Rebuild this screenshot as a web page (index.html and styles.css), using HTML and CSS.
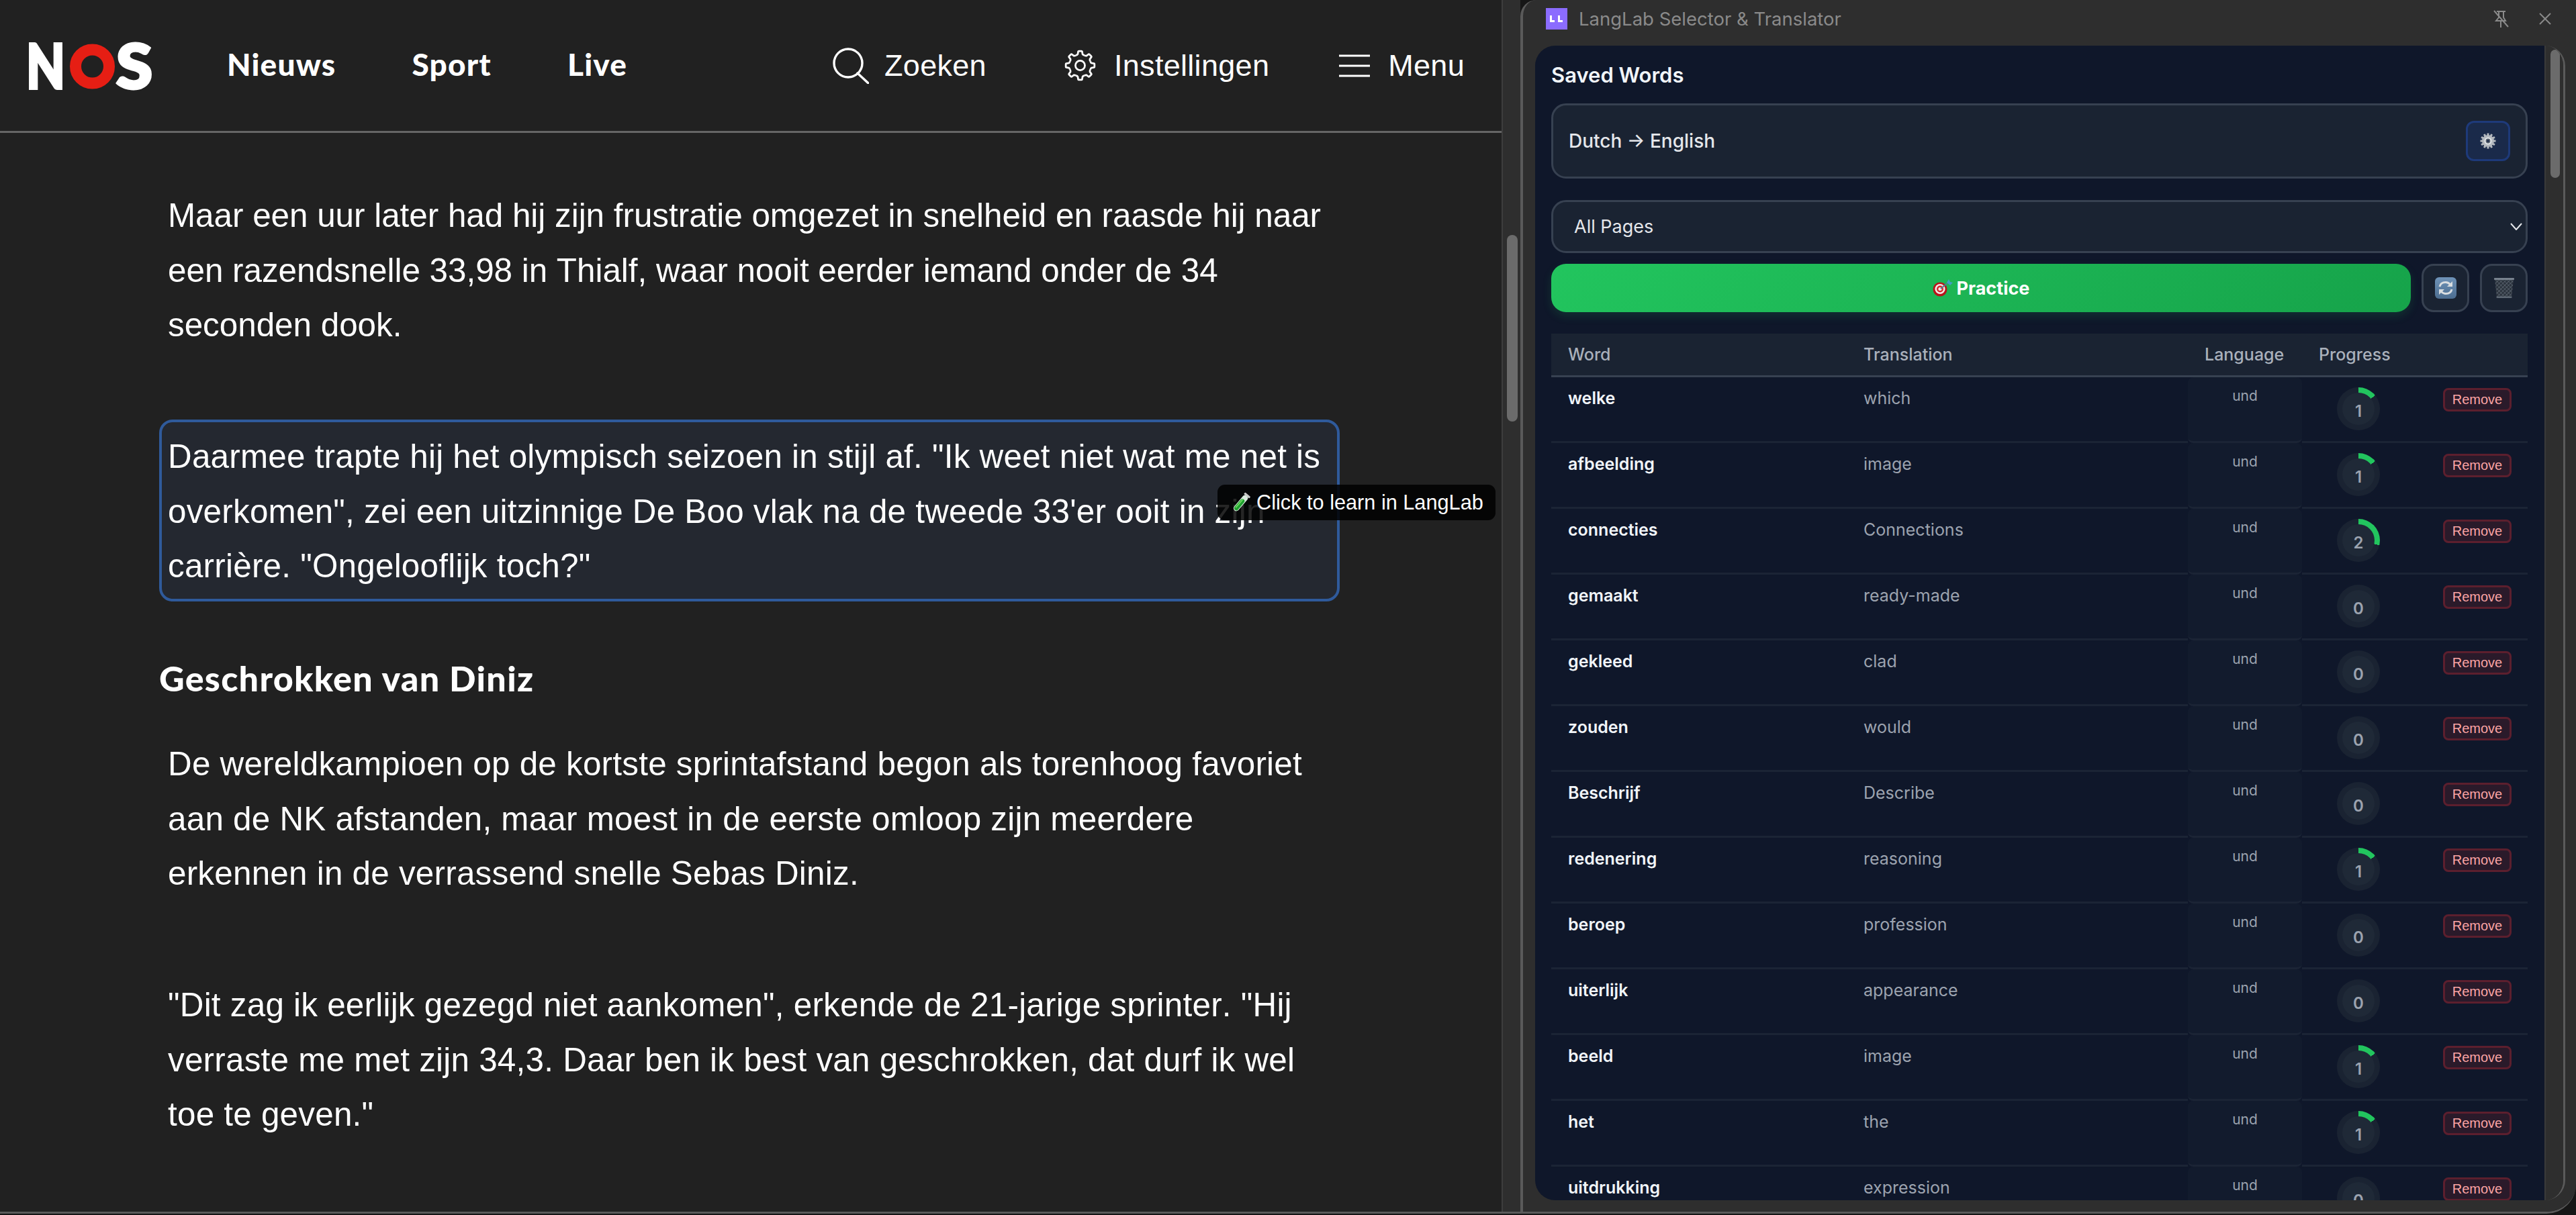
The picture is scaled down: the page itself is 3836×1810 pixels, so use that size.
FILE: index.html
```html
<!DOCTYPE html>
<html lang="nl">
<head>
    <meta charset="UTF-8">
    <title>NOS - LangLab</title>
    <link rel="stylesheet" href="styles.css">
</head>
<body>
    <div class="app">
        <div class="site">
            <header class="site-head">
                <svg class="logo" viewBox="0 0 190 110" width="190" height="110" role="img" aria-label="NOS">
                    <text x="-2" y="88" textLength="58" lengthAdjust="spacingAndGlyphs">N</text>
                    <circle cx="96.5" cy="55" r="25" fill="none" stroke="#e61e14" stroke-width="17"/>
                    <text x="132" y="87.5" textLength="54" lengthAdjust="spacingAndGlyphs">S</text>
                </svg>
                <nav class="main-nav">
                    <a>Nieuws</a>
                    <a>Sport</a>
                    <a>Live</a>
                </nav>
                <div class="tools">
                    <a class="tool tool-search">
                        <svg width="54" height="54" viewBox="0 0 54 54" fill="none" stroke="#fff" stroke-width="3.4" stroke-linecap="round">
                            <circle cx="23" cy="23" r="21"/>
                            <path d="M37 38 L53 53"/>
                        </svg>
                        Zoeken
                    </a>
                    <a class="tool">
                        <svg width="47" height="47" viewBox="0 0 24 24" fill="none" stroke="#fff" stroke-width="1.4" stroke-linejoin="round">
                            <defs>
                                <path id="cog" d="M8.79 4.24C9.5 4.1 10 3.8 10.2 3.4L10.5 1.4Q10.6 1.1 11 1.1H13Q13.4 1.1 13.5 1.4L13.8 3.4C14 3.8 14.5 4.1 15.21 4.24"/>
                            </defs>
                            <use href="#cog"/>
                            <use href="#cog" transform="rotate(45 12 12)"/>
                            <use href="#cog" transform="rotate(90 12 12)"/>
                            <use href="#cog" transform="rotate(135 12 12)"/>
                            <use href="#cog" transform="rotate(180 12 12)"/>
                            <use href="#cog" transform="rotate(225 12 12)"/>
                            <use href="#cog" transform="rotate(270 12 12)"/>
                            <use href="#cog" transform="rotate(315 12 12)"/>
                            <circle cx="12" cy="12" r="3.6"/>
                        </svg>
                        Instellingen
                    </a>
                    <a class="tool">
                        <svg width="46" height="34" viewBox="0 0 46 34" stroke="#fff" stroke-width="3">
                            <path d="M0 2H46M0 17H46M0 32H46"/>
                        </svg>
                        Menu
                    </a>
                </div>
            </header>

            <main class="article">
                <p class="para">Maar een uur later had hij zijn frustratie omgezet in snelheid en raasde hij naar een razendsnelle 33,98 in Thialf, waar nooit eerder iemand onder de 34 seconden dook.</p>
                <p class="para para-wide para-active">Daarmee trapte hij het olympisch seizoen in stijl af. "Ik weet niet wat me net is overkomen", zei een uitzinnige De Boo vlak na de tweede 33'er ooit in zijn carrière. "Ongelooflijk toch?"</p>
                <h2 class="article-sub">Geschrokken van Diniz</h2>
                <p class="para para-wide">De wereldkampioen op de kortste sprintafstand begon als torenhoog favoriet aan de NK afstanden, maar moest in de eerste omloop zijn meerdere erkennen in de verrassend snelle Sebas Diniz.</p>
                <p class="para para-wide">"Dit zag ik eerlijk gezegd niet aankomen", erkende de 21-jarige sprinter. "Hij verraste me met zijn 34,3. Daar ben ik best van geschrokken, dat durf ik wel toe te geven."</p>
            </main>

            <div class="learn-tip">
                <svg width="34" height="34" viewBox="0 0 32 32">
                    <g transform="rotate(40 16 16)">
                        <rect x="12" y="3" width="8" height="27" rx="4" fill="#d8e8dc"/>
                        <rect x="13" y="10" width="6" height="19" rx="3" fill="#1fa02f"/>
                        <rect x="14" y="11" width="1.6" height="15" fill="#6fdc62"/>
                        <rect x="11" y="1" width="10" height="3" rx="1" fill="#c9c9c9"/>
                    </g>
                </svg>
                Click to learn in LangLab
            </div>
        </div>

        <div class="site-scroll"><div class="thumb thumb-site"></div></div>

        <aside class="side">
            <div class="titlebar">
                <span class="app-icon">
                    <svg width="32" height="32" viewBox="0 0 32 32" fill="#fff">
                        <path d="M6 11h3v7h4v3H6zM18 11h3v7h4v3h-7z"/>
                    </svg>
                </span>
                <span class="app-name">LangLab Selector &amp; Translator</span>
                <svg class="pin" width="26" height="26" viewBox="0 0 26 26" fill="none" stroke="#8a8a8a" stroke-width="2">
                    <path d="M7 2H20M10 2V11L6 16H20L17 11V2M13 16V26M3 1L24 25"/>
                </svg>
                <svg class="close" width="18" height="18" viewBox="0 0 18 18" stroke="#8a8a8a" stroke-width="2">
                    <path d="M1 1L17 17M17 1L1 17"/>
                </svg>
            </div>

            <div class="panel">
                <div class="panel-main">
                    <h1 class="panel-title">Saved Words</h1>

                    <div class="lang-box">
                        <span>Dutch → English</span>
                        <button class="lang-btn">
                            <svg width="24" height="24" viewBox="0 0 24 24">
                                <g fill="#b4b9bf">
                                    <circle cx="12" cy="12" r="9"/>
                                    <rect x="10.5" y="0.5" width="3" height="23"/>
                                    <rect x="10.5" y="0.5" width="3" height="23" transform="rotate(30 12 12)"/>
                                    <rect x="10.5" y="0.5" width="3" height="23" transform="rotate(60 12 12)"/>
                                    <rect x="10.5" y="0.5" width="3" height="23" transform="rotate(90 12 12)"/>
                                    <rect x="10.5" y="0.5" width="3" height="23" transform="rotate(120 12 12)"/>
                                    <rect x="10.5" y="0.5" width="3" height="23" transform="rotate(150 12 12)"/>
                                </g>
                                <circle cx="12" cy="12" r="5.6" fill="#dfe3e6"/>
                                <circle cx="12" cy="12" r="3.4" fill="#59626e"/>
                                <circle cx="12" cy="12" r="1.8" fill="#1b2a4a"/>
                            </svg>
                        </button>
                    </div>

                    <div class="page-select">
                        <span>All Pages</span>
                        <svg width="18" height="11" viewBox="0 0 18 11" fill="none" stroke="#e5e7eb" stroke-width="2">
                            <path d="M1 1L9 10L17 1"/>
                        </svg>
                    </div>

                    <div class="actions">
                        <button class="practice-btn">
                            <svg width="30" height="26" viewBox="0 0 30 26">
                                <circle cx="11" cy="15" r="10.5" fill="#b8131b"/>
                                <circle cx="11" cy="14.5" r="7.6" fill="#f3e9e6"/>
                                <circle cx="11" cy="14.5" r="5" fill="#d8232a"/>
                                <circle cx="11" cy="14.5" r="2.6" fill="#f3e9e6"/>
                                <path d="M12 14L24 4" stroke="#4f7f90" stroke-width="2"/>
                                <path d="M21 5L24 0L26 4L30 5L26 9Z" fill="#3f9fc4"/>
                            </svg>
                            Practice
                        </button>
                        <button class="icon-btn">
                            <svg width="32" height="32" viewBox="0 0 32 32">
                                <defs>
                                    <linearGradient id="refreshBg" x1="0" y1="0" x2="0" y2="1">
                                        <stop offset="0" stop-color="#6f93b8"/>
                                        <stop offset="1" stop-color="#4c6d90"/>
                                    </linearGradient>
                                </defs>
                                <rect width="32" height="32" rx="6" fill="url(#refreshBg)"/>
                                <g fill="none" stroke="#d9dde0" stroke-width="3">
                                    <path d="M7 14C8 9 12 7.5 16 7.5C19 7.5 21 9 22.5 10.5"/>
                                    <path d="M25 18C24 23 20 24.5 16 24.5C13 24.5 11 23 9.5 21.5"/>
                                </g>
                                <path d="M26 6V14H18Z M6 26V18H14Z" fill="#d9dde0"/>
                            </svg>
                        </button>
                        <button class="icon-btn">
                            <svg width="32" height="32" viewBox="0 0 32 32">
                                <defs>
                                    <pattern id="mesh" width="4" height="4" patternUnits="userSpaceOnUse" patternTransform="rotate(45)">
                                        <rect width="4" height="4" fill="#2a323c"/>
                                        <path d="M0 0H4M0 0V4" stroke="#6a7480" stroke-width="1.2"/>
                                    </pattern>
                                </defs>
                                <path d="M2 2H30L27 30H5Z" fill="url(#mesh)"/>
                                <rect x="1" y="1" width="30" height="3" rx="1" fill="#78828e"/>
                                <rect x="4.5" y="28.5" width="23" height="2.5" rx="1" fill="#5d6773"/>
                            </svg>
                        </button>
                    </div>

                    <table class="words">
                        <colgroup>
                            <col class="col-word">
                            <col class="col-trans">
                            <col class="col-lang">
                            <col class="col-prog">
                            <col class="col-act">
                        </colgroup>
                        <thead>
                            <tr>
                                <th>Word</th>
                                <th>Translation</th>
                                <th>Language</th>
                                <th>Progress</th>
                                <th></th>
                            </tr>
                        </thead>
                        <tbody>
                            <tr><td class="w">welke</td><td class="t">which</td><td class="l">und</td><td class="p"><div class="ring lvl-1"><span>1</span></div></td><td class="a"><button class="remove">Remove</button></td></tr>
                            <tr><td class="w">afbeelding</td><td class="t">image</td><td class="l">und</td><td class="p"><div class="ring lvl-1"><span>1</span></div></td><td class="a"><button class="remove">Remove</button></td></tr>
                            <tr><td class="w">connecties</td><td class="t">Connections</td><td class="l">und</td><td class="p"><div class="ring lvl-2"><span>2</span></div></td><td class="a"><button class="remove">Remove</button></td></tr>
                            <tr><td class="w">gemaakt</td><td class="t">ready-made</td><td class="l">und</td><td class="p"><div class="ring"><span>0</span></div></td><td class="a"><button class="remove">Remove</button></td></tr>
                            <tr><td class="w">gekleed</td><td class="t">clad</td><td class="l">und</td><td class="p"><div class="ring"><span>0</span></div></td><td class="a"><button class="remove">Remove</button></td></tr>
                            <tr><td class="w">zouden</td><td class="t">would</td><td class="l">und</td><td class="p"><div class="ring"><span>0</span></div></td><td class="a"><button class="remove">Remove</button></td></tr>
                            <tr><td class="w">Beschrijf</td><td class="t">Describe</td><td class="l">und</td><td class="p"><div class="ring"><span>0</span></div></td><td class="a"><button class="remove">Remove</button></td></tr>
                            <tr><td class="w">redenering</td><td class="t">reasoning</td><td class="l">und</td><td class="p"><div class="ring lvl-1"><span>1</span></div></td><td class="a"><button class="remove">Remove</button></td></tr>
                            <tr><td class="w">beroep</td><td class="t">profession</td><td class="l">und</td><td class="p"><div class="ring"><span>0</span></div></td><td class="a"><button class="remove">Remove</button></td></tr>
                            <tr><td class="w">uiterlijk</td><td class="t">appearance</td><td class="l">und</td><td class="p"><div class="ring"><span>0</span></div></td><td class="a"><button class="remove">Remove</button></td></tr>
                            <tr><td class="w">beeld</td><td class="t">image</td><td class="l">und</td><td class="p"><div class="ring lvl-1"><span>1</span></div></td><td class="a"><button class="remove">Remove</button></td></tr>
                            <tr><td class="w">het</td><td class="t">the</td><td class="l">und</td><td class="p"><div class="ring lvl-1"><span>1</span></div></td><td class="a"><button class="remove">Remove</button></td></tr>
                            <tr><td class="w">uitdrukking</td><td class="t">expression</td><td class="l">und</td><td class="p"><div class="ring"><span>0</span></div></td><td class="a"><button class="remove">Remove</button></td></tr>
                        </tbody>
                    </table>
                </div>
                <div class="panel-scroll"><div class="thumb thumb-panel"></div></div>
            </div>
        </aside>
    </div>
</body>
</html>
```

FILE: styles.css
```css
* {
    box-sizing: border-box;
    margin: 0;
    padding: 0;
}
body {
    width: 3836px;
    height: 1810px;
    overflow: hidden;
    background: #161616;
    font-family: 'Liberation Sans', Arial, sans-serif;
    font-kerning: none;
    color: #fff;
}
button {
    font: inherit;
    color: inherit;
    cursor: pointer;
}
.app {
    display: flex;
    height: 1808px;
    border-bottom: 3px solid #5a5a5a;
    border-bottom-right-radius: 44px;
    overflow: hidden;
}

/* NOS page */
.site {
    position: relative;
    width: 2238px;
    flex: none;
    background: #212121;
    border-right: 2px solid #3e3e3e;
}
.site-head {
    display: flex;
    align-items: center;
    height: 198px;
    padding: 0 55px 0 41px;
    border-bottom: 3px solid #666;
}
.logo {
    margin-top: 2px;
    overflow: visible;
}
.logo text {
    font-family: 'Lato', sans-serif;
    font-weight: 900;
    font-size: 92px;
    fill: #fff;
    stroke: #fff;
    stroke-width: 4px;
}
.main-nav {
    display: flex;
    gap: 113px;
    margin: 0 0 4px 107px;
    font-family: 'Lato', sans-serif;
    font-kerning: normal;
    font-weight: 900;
    font-size: 46px;
    letter-spacing: 1.2px;
}
.tools {
    display: flex;
    align-items: center;
    gap: 104px;
    margin-left: auto;
    font-size: 45px;
    letter-spacing: 0.3px;
}
.tool {
    display: flex;
    align-items: center;
    gap: 27px;
}
.tool-search {
    gap: 23px;
    margin-right: 12px;
}
.article {
    padding: 68px 0 0 237px;
}
.para {
    width: 1758px;
    height: 271px;
    margin-bottom: 88px;
    padding: 10px 9px;
    border: 4px solid transparent;
    border-radius: 20px;
    font-size: 49.35px;
    line-height: 81.5px;
}
.para-wide {
    letter-spacing: 0.25px;
}
.para-active {
    margin-bottom: 78px;
    background: #242830;
    border-color: #2f5a9b;
}
.article-sub {
    margin-bottom: 37px;
    font-family: 'Lato', sans-serif;
    font-kerning: normal;
    font-weight: 900;
    font-size: 52px;
    line-height: 72px;
    letter-spacing: 1.3px;
}
.learn-tip {
    position: absolute;
    left: 1813px;
    top: 722px;
    display: flex;
    align-items: center;
    gap: 6px;
    width: 414px;
    height: 53px;
    padding-left: 18px;
    background: rgba(0, 0, 0, 0.85);
    border-radius: 11px;
    font-size: 30.7px;
}

/* scrollbars */
.site-scroll {
    width: 26px;
    flex: none;
    padding: 350px 4px 0 6px;
    background: #2e2e2e;
}
.thumb {
    background: #6b6b6b;
    border-radius: 8px;
}
.thumb-site {
    height: 278px;
}
.thumb-panel {
    height: 191px;
}

/* LangLab side panel */
.side {
    display: flex;
    flex: 1;
    flex-direction: column;
    min-width: 0;
    background: #2e2e2e;
    border-left: 4px solid #5a5a5a;
    border-top-left-radius: 24px;
    font-family: 'Inter', sans-serif;
    font-kerning: normal;
}
.titlebar {
    display: flex;
    align-items: center;
    height: 68px;
    flex: none;
    padding: 0 37px 12px 34px;
}
.app-icon {
    display: flex;
    width: 32px;
    height: 32px;
    background: #8b6cff;
}
.app-name {
    margin-left: 17px;
    font-size: 27.5px;
    color: #8a8a8a;
}
.pin {
    margin-left: auto;
}
.close {
    margin-left: 44px;
}
.panel {
    display: flex;
    flex: 1;
    min-height: 0;
    margin: 0 16px 17px 18px;
    border-right: 3px solid #5a5a5a;
    border-radius: 30px;
    overflow: hidden;
}
.panel-main {
    flex: 1;
    min-width: 0;
    padding: 24px 25px 0 24px;
    background: #0f172a;
    overflow: hidden;
}
.panel-scroll {
    width: 28px;
    flex: none;
    padding: 6px 5px 0 7px;
    background: #2e2e2e;
    border-left: 2px solid #3a3a3a;
}
.panel-title {
    height: 40px;
    margin-bottom: 22px;
    font-size: 31px;
    font-weight: 600;
    line-height: 40px;
    color: #f1f5f9;
}
.lang-box {
    display: flex;
    align-items: center;
    justify-content: space-between;
    height: 112px;
    margin-bottom: 32px;
    padding: 0 23px;
    background: #1a2332;
    border: 3px solid #374151;
    border-radius: 22px;
    font-size: 28px;
    font-weight: 500;
    color: #e5e7eb;
}
.lang-btn {
    display: flex;
    align-items: center;
    justify-content: center;
    width: 66px;
    height: 60px;
    background: #1a2a4a;
    border: 3px solid #1e3a7a;
    border-radius: 12px;
}
.page-select {
    display: flex;
    align-items: center;
    justify-content: space-between;
    height: 79px;
    margin-bottom: 16px;
    padding: 0 5px 0 31px;
    background: #1a2332;
    border: 3px solid #374151;
    border-radius: 22px;
    font-size: 27px;
    color: #e5e7eb;
}
.actions {
    display: flex;
    gap: 16px;
    height: 72px;
    margin-bottom: 32px;
}
.practice-btn {
    display: flex;
    align-items: center;
    justify-content: center;
    gap: 6px;
    flex: 1;
    background: linear-gradient(135deg, #22c55e, #16a34a);
    border: none;
    border-radius: 22px;
    box-shadow: 0 6px 14px rgba(34, 197, 94, 0.15);
    font-size: 27px;
    font-weight: 700;
    color: #fff;
}
.icon-btn {
    display: flex;
    align-items: center;
    justify-content: center;
    width: 71px;
    background: #1a2332;
    border: 3px solid #374151;
    border-radius: 18px;
}

/* word table */
.words {
    width: 1454px;
    table-layout: fixed;
    border-collapse: separate;
    border-spacing: 0;
    font-size: 25px;
}
.col-word { width: 440px; }
.col-trans { width: 508px; }
.col-lang { width: 170px; }
.col-prog { width: 168px; }
.col-act { width: 168px; }
.words th {
    height: 65px;
    padding: 0 0 0 25px;
    background: #1a2332;
    border-bottom: 3px solid #374151;
    font-weight: 500;
    text-align: left;
    white-space: nowrap;
    color: #a9b0bb;
}
.words tbody tr {
    height: 98px;
}
.words td {
    height: 98px;
    vertical-align: top;
    border-bottom: 3px solid #1b2435;
}
.w {
    padding: 16px 0 0 25px;
    font-weight: 600;
    color: #f1f5f9;
}
.t {
    padding: 16px 0 0 25px;
    color: #9ca3af;
}
.l {
    padding-top: 15px;
    background: #121b2d;
    border-radius: 8px;
    font-size: 21px;
    text-align: center;
    color: #9ca3af;
}
.p {
    padding-top: 15px;
}
.a {
    padding: 16px 24px 0 0;
    text-align: right;
}
.ring {
    display: flex;
    align-items: center;
    justify-content: center;
    width: 64px;
    height: 64px;
    margin: 0 auto;
    background: #1a2332;
    border-radius: 50%;
}
.lvl-1 {
    background: conic-gradient(#22c55e 0 51deg, #1a2332 0);
}
.lvl-2 {
    background: conic-gradient(#22c55e 0 103deg, #1a2332 0);
}
.ring span {
    width: 48px;
    height: 48px;
    padding-top: 13px;
    background: #1f2937;
    border-radius: 50%;
    font-size: 24px;
    font-weight: 600;
    line-height: 30px;
    text-align: center;
    color: #9ca3af;
}
.remove {
    width: 102px;
    height: 35px;
    background: #2a1a2a;
    border: 3px solid #5c1f2e;
    border-radius: 8px;
    font-family: 'Liberation Sans', Arial, sans-serif;
    font-size: 20px;
    color: #fca5a5;
}
```
